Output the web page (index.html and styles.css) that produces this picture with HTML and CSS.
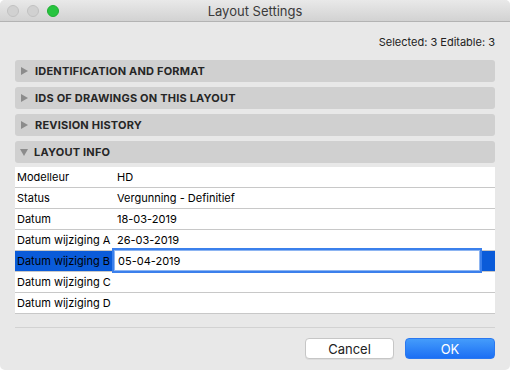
FILE: index.html
```html
<!DOCTYPE html>
<html lang="en">
<head>
  <meta charset="UTF-8" />
  <title>Layout Settings</title>
  <link rel="stylesheet" href="styles.css">
</head>
<body>

  <div class="window">
    <!-- Title bar -->
    <div class="titlebar">
      <div class="lights">
        <span class="light off"></span>
        <span class="light off"></span>
        <span class="light green"></span>
      </div>
      <div class="title">Layout Settings</div>
    </div>

    <div class="content">
      <p class="selection-info">Selected: 3 Editable: 3</p>

      <!-- Collapsible sections -->
      <div class="section-header"><span class="arrow right"></span>Identification and Format</div>
      <div class="section-header"><span class="arrow right"></span>IDs of Drawings on this Layout</div>
      <div class="section-header"><span class="arrow right"></span>Revision History</div>
      <div class="section-header"><span class="arrow down"></span>Layout Info</div>

      <div class="info-table">
        <div class="row"><div class="label">Modelleur</div><div class="value">HD</div></div>
        <div class="row"><div class="label">Status</div><div class="value">Vergunning - Definitief</div></div>
        <div class="row"><div class="label">Datum</div><div class="value">18-03-2019</div></div>
        <div class="row"><div class="label">Datum wijziging A</div><div class="value">26-03-2019</div></div>
        <div class="row selected">
          <div class="label">Datum wijziging B</div>
          <div class="value"><div class="edit-field">05-04-2019</div></div>
        </div>
        <div class="row"><div class="label">Datum wijziging C</div><div class="value"></div></div>
        <div class="row"><div class="label">Datum wijziging D</div><div class="value"></div></div>
      </div>

      <div class="separator"></div>

      <div class="buttons">
        <button class="btn cancel">Cancel</button>
        <button class="btn ok">OK</button>
      </div>
    </div>
  </div>

</body>
</html>
```

FILE: styles.css
```css
/* Basic page styling */
* {
  box-sizing: border-box;
  margin: 0;
  padding: 0;
}
body {
  background: #ffffff;
  font-family: "Inter", "Noto Sans", sans-serif;
  color: #000;
  width: 510px;
  height: 370px;
  overflow: hidden;
}

/* ============================================================
   Window + title bar
   ============================================================ */
.window {
  width: 510px;
  height: 370px;
  background: #e8e8e8;
  border-radius: 5px;
  overflow: hidden;
}
.titlebar {
  height: 22px;
  background: linear-gradient(#e9e9e9, #d2d2d2);
  border-bottom: 1px solid #b3b3b3;
  position: relative;
  display: flex;
  align-items: center;
  justify-content: center;
}
.lights {
  position: absolute;
  left: 7px;
  top: 5px;
  display: flex;
  gap: 8px;
}
.light {
  width: 12px;
  height: 12px;
  border-radius: 50%;
}
.light.off {
  background: #d1d1d1;
  border: 1px solid #c1c1c1;
}
.light.green {
  background: #27c43f;
  border: 1px solid #1fae32;
}
.title {
  font-size: 13px;
  color: #3a3a3a;
}

/* ============================================================
   Content
   ============================================================ */
.content {
  padding: 0 15px;
}
.selection-info {
  margin-top: 13px;
  margin-bottom: 11px;
  line-height: 14px;
  font-size: 11px;
  text-align: right;
  color: #222;
}
.section-header {
  height: 22px;
  margin-bottom: 5px;
  background: #d0d0d0;
  border-radius: 3px;
  display: flex;
  align-items: center;
  padding-left: 6px;
  font-size: 11px;
  font-weight: bold;
  text-transform: uppercase;
  color: #262626;
  letter-spacing: 0.2px;
}
.arrow {
  width: 0;
  height: 0;
  margin-right: 8px;
}
.arrow.right {
  border-top: 4.5px solid transparent;
  border-bottom: 4.5px solid transparent;
  border-left: 7px solid #8c8c8c;
  margin-left: 0;
  margin-right: 7px;
}
.arrow.down {
  border-left: 4.5px solid transparent;
  border-right: 4.5px solid transparent;
  border-top: 7px solid #8c8c8c;
  margin-left: -1px;
  margin-right: 6px;
}

/* Info table */
.info-table {
  margin-top: -1px;
  background: #fff;
}
.row {
  display: flex;
  height: 21px;
  border-bottom: 1px solid #c8c8c8;
  font-size: 11px;
  line-height: 21px;
}
.label {
  width: 100px;
  padding-left: 2px;
  white-space: nowrap;
}
.value {
  flex: 1;
  padding-left: 2px;
}
.row.selected {
  background: #0a5bd9;
}
.row.selected .value {
  padding: 0 15px 0 0;
}
.edit-field {
  height: 21px;
  margin-top: -1px;
  margin-left: -1px;
  background: #fff;
  border: 1px solid #8db5f2;
  box-shadow: 0 0 0 2px #3b80ec;
  padding-left: 3px;
  line-height: 20px;
}

.separator {
  height: 1px;
  background: #d2d2d2;
  margin-top: 13px;
}

/* Buttons */
.buttons {
  display: flex;
  justify-content: flex-end;
  gap: 11px;
  margin-top: 10px;
}
.btn {
  height: 21px;
  font-family: inherit;
  font-size: 13px;
  border-radius: 4px;
}
.btn.cancel {
  width: 89px;
  background: #fff;
  color: #222;
  border: 1px solid #c6c6c6;
  box-shadow: 0 1px 0 rgba(0, 0, 0, 0.05);
}
.btn.ok {
  width: 90px;
  background: linear-gradient(#449cfb, #1c6ff4);
  color: #fff;
  border: 1px solid #2a78f0;
}
```
